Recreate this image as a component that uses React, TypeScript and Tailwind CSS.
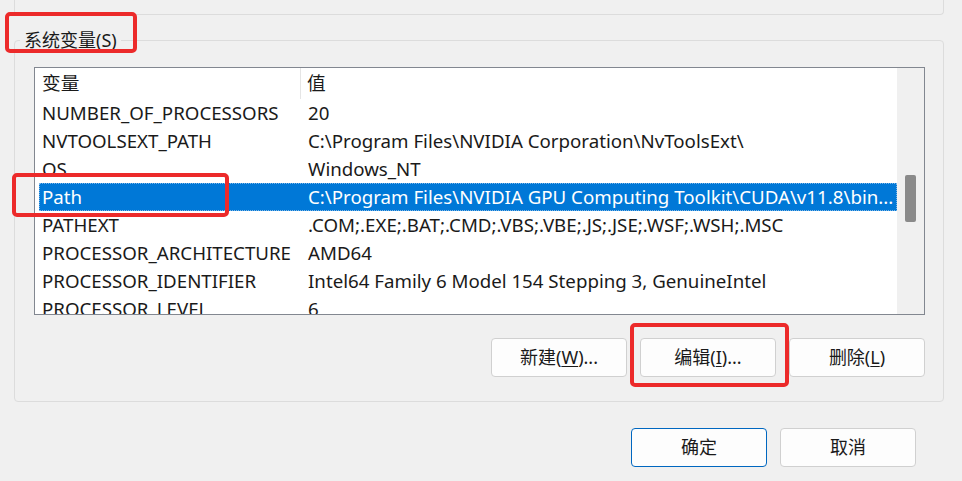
import React from "react";

const rows: [string, string][] = [
  ["NUMBER_OF_PROCESSORS", "20"],
  ["NVTOOLSEXT_PATH", "C:\\Program Files\\NVIDIA Corporation\\NvToolsExt\\"],
  ["OS", "Windows_NT"],
  ["Path", "C:\\Program Files\\NVIDIA GPU Computing Toolkit\\CUDA\\v11.8\\bin..."],
  ["PATHEXT", ".COM;.EXE;.BAT;.CMD;.VBS;.VBE;.JS;.JSE;.WSF;.WSH;.MSC"],
  ["PROCESSOR_ARCHITECTURE", "AMD64"],
  ["PROCESSOR_IDENTIFIER", "Intel64 Family 6 Model 154 Stepping 3, GenuineIntel"],
  ["PROCESSOR_LEVEL", "6"],
];

const font = { fontFamily: '"Noto Sans", "Noto Sans CJK SC", sans-serif' };

function Btn({ children, primary }: { children: React.ReactNode; primary?: boolean }) {
  return (
    <button
      className={
        primary
          ? "w-[136px] h-[39px] rounded-[4px] border border-[#0067c0] bg-[#fdfdfd] text-[18px] text-[#1a1a1a] flex items-center justify-center"
          : "w-[136px] h-[39px] rounded-[4px] border border-[#d0d0d0] bg-[#fdfdfd] text-[18px] text-[#1a1a1a] flex items-center justify-center"
      }
    >
      {children}
    </button>
  );
}

export default function App() {
  return (
    <div className="relative w-[962px] h-[481px] bg-[#f0f0f0] overflow-hidden text-[#1a1a1a]" style={font}>
      {/* previous group box bottom */}
      <div className="ml-[14px] w-[930px] h-[15px] border-x border-b border-[#dcdcdc] rounded-b-[4px]" />

      {/* system variables group box */}
      <div className="relative ml-[14px] mt-[25px] w-[930px] h-[362px] border border-[#dcdcdc] rounded-[4px]">
        <div className="absolute left-[5px] top-[-14px] px-[4px] bg-[#f0f0f0] text-[18px] leading-[26px]">
          系统变量(<span className="underline underline-offset-2">S</span>)
        </div>

        <div className="ml-[19px] mt-[26px] w-[891px] h-[248px] border border-[#828790] bg-white flex overflow-hidden">
          <div className="flex-1 flex flex-col">
            <div className="h-[31px] flex items-center text-[18.7px] shrink-0">
              <div className="w-[266px] h-full pl-[7px] flex items-center border-r border-[#e5e5e5]">变量</div>
              <div className="pl-[6px]">值</div>
            </div>
            {rows.map(([k, v], i) => {
              const sel = k === "Path";
              return (
                <div
                  key={i}
                  className={
                    sel
                      ? "h-[28px] shrink-0 flex items-center text-[18.7px] ml-[4px] bg-[#0078d7] text-white outline-1 outline-dotted outline-[#7fb6e6] -outline-offset-1"
                      : "h-[28px] shrink-0 flex items-center text-[18.7px] ml-[4px]"
                  }
                >
                  <div className="w-[262px] pl-[3px] whitespace-nowrap">{k}</div>
                  <div className="pl-[7px] whitespace-nowrap">{v}</div>
                </div>
              );
            })}
          </div>
          <div className="w-[27px] h-full bg-[#f0f0f0] relative shrink-0">
            <div className="absolute left-[8px] top-[107px] w-[11px] h-[47px] bg-[#8a8a8a] rounded-[2px]" />
          </div>
        </div>

        <div className="mt-[23px] mr-[18px] flex justify-end gap-[13px]">
          <Btn>
            新建(<span className="underline underline-offset-2">W</span>)...
          </Btn>
          <Btn>
            编辑(<span className="underline underline-offset-2">I</span>)...
          </Btn>
          <Btn>
            删除(<span className="underline underline-offset-2">L</span>)
          </Btn>
        </div>
      </div>

      <div className="mt-[26px] ml-[631px] flex gap-[13px]">
        <Btn primary>确定</Btn>
        <Btn>取消</Btn>
      </div>

      {/* red highlight annotations */}
      <div className="absolute left-[5px] top-[12px] w-[132px] h-[41px] border-[4px] border-[#ec2a2a] rounded-[5px]" />
      <div className="absolute left-[12px] top-[173px] w-[217px] h-[44px] border-[4px] border-[#ec2a2a] rounded-[5px]" />
      <div className="absolute left-[630px] top-[323px] w-[159px] h-[64px] border-[4px] border-[#ec2a2a] rounded-[5px]" />
    </div>
  );
}
